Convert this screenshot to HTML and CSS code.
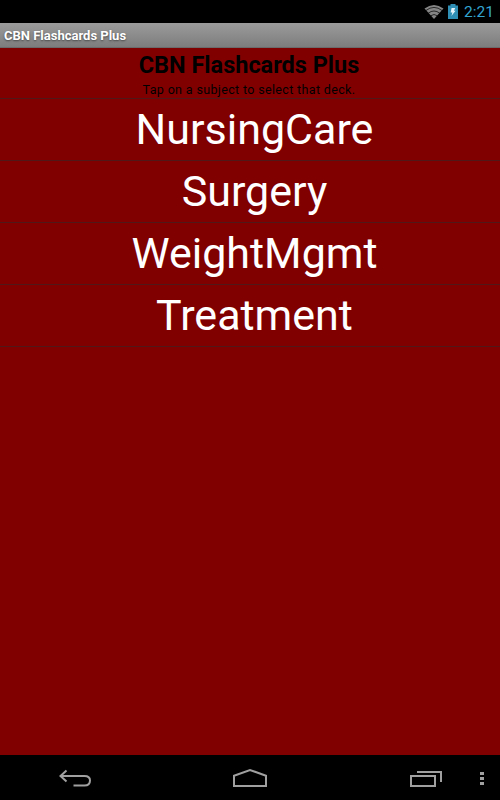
FILE: index.html
```html
<!DOCTYPE html>
<html lang="en">
<head>
    <meta charset="utf-8">
    <title>CBN Flashcards Plus</title>
    <link rel="stylesheet" href="styles.css">
</head>
<body>
    <div class="status-bar">
        <svg class="wifi" width="20" height="16" viewBox="0 0 20 16">
            <path d="M0.5 4.6 Q10 -2.8 19.5 4.6 L10 15 Z" fill="#858585"/>
            <path d="M1.8 6.6 Q10 0.2 18.2 6.6 M4.2 9.2 Q10 4.8 15.8 9.2 M6.6 11.8 Q10 9.2 13.4 11.8" fill="none" stroke="#000" stroke-width="0.7"/>
        </svg>
        <svg class="battery" width="10" height="15" viewBox="0 0 10 15">
            <path d="M0 1.5H2.5V0H7.5V1.5H10V15H0Z" fill="#2f8fb5"/>
            <path d="M3.6 4H7.2L6 6.8H7.6L3.4 12L4.4 8.4H2.6Z" fill="#e4f4fa"/>
        </svg>
        <span class="clock">2:21</span>
    </div>
    <div class="title-bar">CBN Flashcards Plus</div>
    <main>
        <header>
            <h1>CBN Flashcards Plus</h1>
            <p>Tap on a subject to select that deck.</p>
        </header>
        <ul class="decks">
            <li>NursingCare</li>
            <li>Surgery</li>
            <li>WeightMgmt</li>
            <li>Treatment</li>
        </ul>
    </main>
    <nav>
        <svg class="back" width="34" height="20" viewBox="0 0 34 20">
            <path d="M7.5 1.5L1.5 7L7.5 12.5M2 7H25.5Q31 7 31 11.5Q31 16.5 25.5 16.5H14.5" fill="none" stroke="#a0a0a0" stroke-width="2"/>
        </svg>
        <svg class="home" width="36" height="20" viewBox="0 0 36 20">
            <path d="M2 18V7.7L18 2L34 7.7V18Z" fill="none" stroke="#a0a0a0" stroke-width="2"/>
        </svg>
        <svg class="recent" width="34" height="18" viewBox="0 0 34 18">
            <path d="M2 6H26V16H2ZM8 2H32V12" fill="none" stroke="#a0a0a0" stroke-width="2"/>
        </svg>
        <svg class="more" width="4" height="14" viewBox="0 0 4 14">
            <path d="M0 0H4V3H0ZM0 5H4V8H0ZM0 10H4V13H0Z" fill="#a0a0a0"/>
        </svg>
    </nav>
</body>
</html>
```

FILE: styles.css
```css
body {
    margin: 0;
    height: 100vh;
    display: flex;
    flex-direction: column;
    background-color: #800000;
    font-family: Roboto, sans-serif;
    overflow: hidden;
}

.status-bar {
    box-sizing: border-box;
    height: 23px;
    padding-right: 7px;
    display: flex;
    justify-content: flex-end;
    align-items: center;
    background-color: #000;
}
.wifi {
    margin: 1px 4px 0 0;
}
.battery {
    margin-right: 6px;
}
.clock {
    width: 29px;
    color: #33a5d0;
    font-size: 15.5px;
    line-height: 23px;
    padding-top: 2px;
    white-space: nowrap;
}

.title-bar {
    box-sizing: border-box;
    height: 25px;
    padding-left: 4px;
    border-bottom: 1px solid #6b6b6b;
    background: linear-gradient(#9b9b9b, #7d7d7d);
    color: #fff;
    font-size: 13px;
    font-weight: bold;
    line-height: 26px;
    text-shadow: 0 1px 2px #444;
}

main {
    flex: 1;
    text-align: center;
}
header {
    box-sizing: border-box;
    height: 51px;
    padding-right: 2px;
    border-bottom: 1px solid #501818;
}
h1 {
    margin: 0;
    font-size: 23.5px;
    line-height: 34px;
}
header p {
    margin: 0;
    font-size: 12.5px;
    line-height: 16px;
    letter-spacing: 0.35px;
}

.decks {
    margin: 0;
    padding: 0;
    list-style: none;
}
.decks li {
    box-sizing: border-box;
    height: 62px;
    padding-left: 9px;
    border-bottom: 1px solid #501818;
    color: #fff;
    font-size: 43px;
    line-height: 60px;
}

nav {
    height: 45px;
    display: flex;
    align-items: center;
    background-color: #000;
}
.back {
    margin: 2px 0 0 59px;
}
.home {
    margin-left: 139px;
}
.recent {
    margin: 3px 0 0 141px;
}
.more {
    margin: 2px 0 0 37px;
}
```
